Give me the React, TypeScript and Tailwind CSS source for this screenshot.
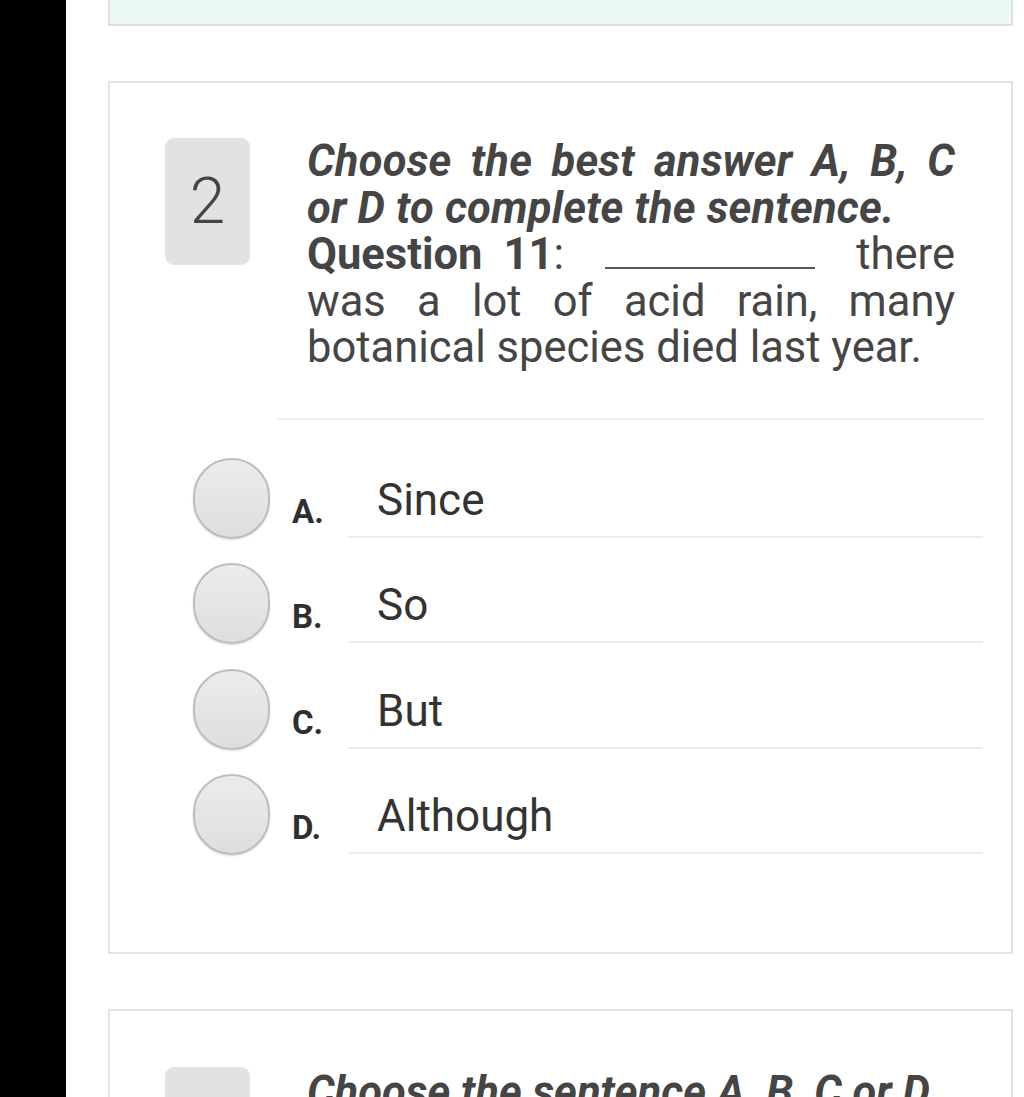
import React from "react";

const options = [
  { letter: "A.", text: "Since" },
  { letter: "B.", text: "So" },
  { letter: "C.", text: "But" },
  { letter: "D.", text: "Although" },
];

function Radio() {
  return (
    <div className="w-[77px] h-[81px] shrink-0 rounded-full border-2 border-[#bdbdbd] bg-gradient-to-b from-[#ececec] to-[#dedede] shadow-[0_1px_2px_rgba(0,0,0,0.15)]" />
  );
}

export default function App() {
  return (
    <div
      className="flex w-[1024px] h-[1097px] overflow-hidden bg-white text-[#454545]"
      style={{ fontFamily: "Roboto, 'Liberation Sans', sans-serif" }}
    >
      <div className="w-[66px] h-full bg-black shrink-0" />
      <div className="flex flex-col pl-[42px] w-[947px] shrink-0">
        {/* top card (cropped) */}
        <div className="shrink-0 h-[26px] w-[905px] bg-[#ebf9f3] border-x-2 border-b-2 border-[#e0e0e0]" />

        {/* question card */}
        <div className="shrink-0 mt-[55px] w-[905px] h-[873px] border-2 border-[#e3e3e3] flex flex-col">
          <div className="flex pl-[55px] pt-[55px] gap-[57px]">
            <div className="w-[85px] h-[127px] rounded-[9px] bg-[#e2e2e2] flex items-center justify-center shrink-0">
              <span className="text-[64px] font-light text-[#444] leading-none">2</span>
            </div>
            <div className="w-[648px] text-[43.5px] leading-[46.5px] text-justify pt-[1px]">
              <p className="font-bold italic tracking-[0.2px]">
                <span className="block [text-align-last:justify]">Choose the best answer A, B, C</span>
                <span className="block">or D to complete the sentence.</span>
              </p>
              <p>
                <span className="font-bold">Question 11</span>:{" "}
                <span className="inline-block w-[210px] h-0 border-b-2 border-[#555] mx-[20px] align-baseline" />{" "}
                there was a lot of acid rain, many botanical species died last year.
              </p>
            </div>
          </div>
          <div className="ml-[168px] mr-[28px] mt-[46px] border-t-2 border-[#ededed]" />
          <div className="flex flex-col mt-[38px] pl-[83px] pr-[28px]">
            {options.map((o) => (
              <div key={o.letter} className="flex h-[105.5px] shrink-0">
                <Radio />
                <div className="w-[56px] ml-[22px] pt-[36px] text-[33px] leading-[36px] font-bold text-[#2f2f2f]">
                  {o.letter}
                </div>
                <div className="flex-1 h-[80px] border-b-2 border-[#ececec] pl-[29px] pt-[17px] text-[44px] leading-[50px] text-[#333]">
                  {o.text}
                </div>
              </div>
            ))}
          </div>
        </div>

        {/* next card (cropped) */}
        <div className="shrink-0 mt-[55px] w-[905px] h-[200px] border-2 border-[#e3e3e3] flex pl-[55px] pt-[56px] gap-[57px]">
          <div className="w-[85px] h-[127px] rounded-[9px] bg-[#e2e2e2] shrink-0" />
          <div className="w-[648px] text-[43.5px] leading-[46.5px] font-bold italic pt-[3px]">
            Choose the sentence A, B, C or D
          </div>
        </div>
      </div>
    </div>
  );
}
